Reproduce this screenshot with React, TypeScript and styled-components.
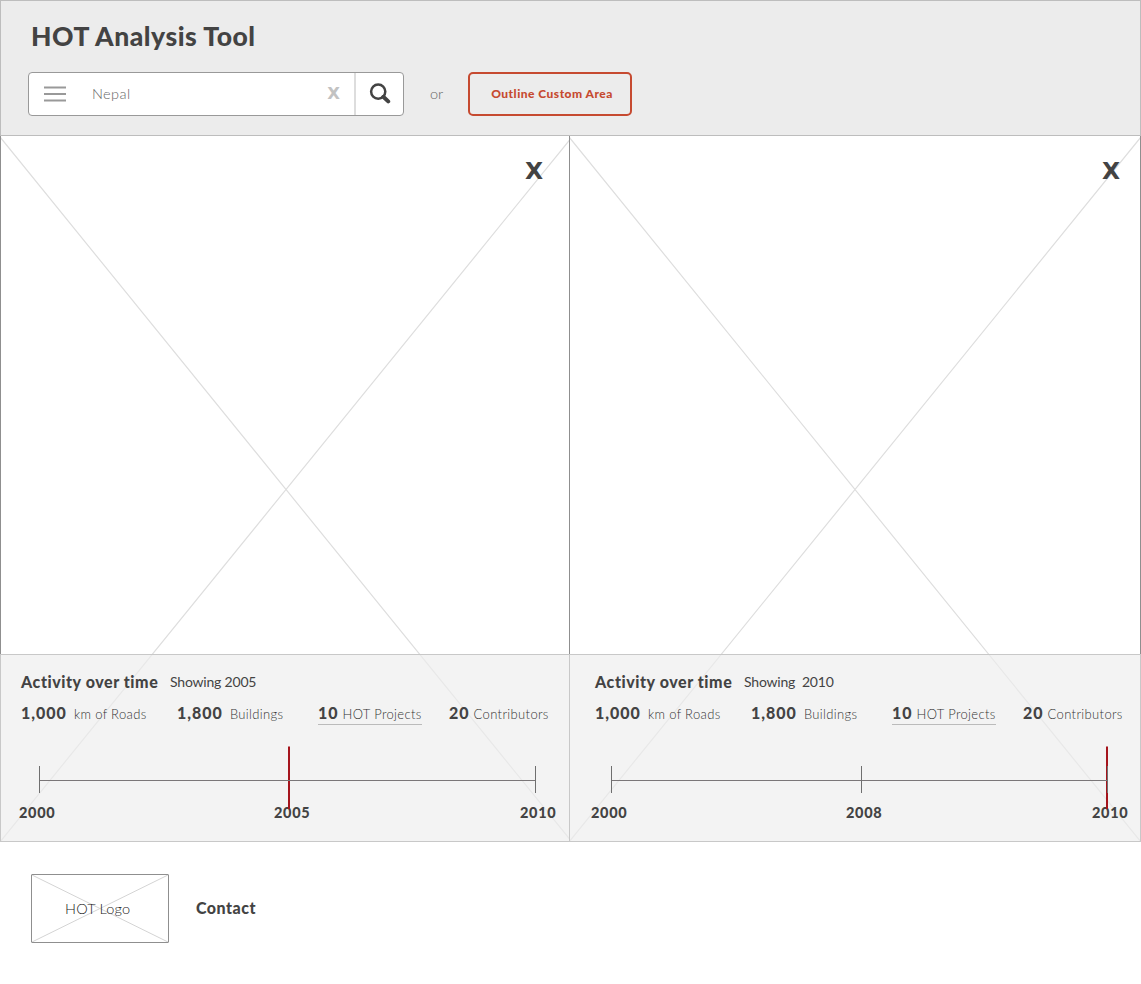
import React from "react";
import styled, { createGlobalStyle } from "styled-components";

const GlobalStyle = createGlobalStyle`
  *, *::before, *::after { box-sizing: border-box; }
  body {
    margin: 0;
    background: #fff;
    color: #434343;
    font-family: Lato, "Liberation Sans", sans-serif;
  }
`;

const Page = styled.div`
  width: 1141px;
  height: 984px;
  overflow: hidden;
`;

const Header = styled.header`
  height: 136px;
  padding: 19px 27px 0;
  background: #ececec;
  border: 1px solid #bdbdbd;
`;

const Title = styled.h1`
  margin: 0 0 20px 3px;
  font-size: 26.5px;
  font-weight: 900;
  line-height: 32px;
  letter-spacing: 0.52px;
`;

const Toolbar = styled.div`
  display: flex;
  align-items: center;
  height: 44px;
`;

const SearchBox = styled.div`
  display: flex;
  align-items: stretch;
  width: 376px;
  height: 44px;
  overflow: hidden;
  background: #fff;
  border: 1px solid #999;
  border-radius: 4px;
`;

const IconButton = styled.button<{ $width: number; $divided?: boolean }>`
  display: flex;
  align-items: center;
  justify-content: center;
  width: ${(p) => p.$width}px;
  padding: 0;
  background: none;
  border: 0;
  border-left: ${(p) => (p.$divided ? "2px solid #ddd" : "0")};
`;

const Query = styled.div`
  flex: 1;
  padding-left: 11px;
  color: #666;
  font-size: 14.5px;
  font-weight: 300;
  line-height: 42px;
  letter-spacing: 0.4px;
`;

const ClearButton = styled.button`
  width: 41px;
  padding: 0;
  color: #c2c2c2;
  background: none;
  border: 0;
  font: 700 16.5px/40px "DejaVu Sans", sans-serif;
`;

const Or = styled.span`
  width: 64px;
  padding-left: 26px;
  color: #666;
  font-size: 14.5px;
  font-weight: 300;
  line-height: 44px;
`;

const OutlineButton = styled.button`
  width: 164px;
  height: 44px;
  padding: 0 0 0 4px;
  color: #c64a30;
  background: none;
  border: 2px solid #c64a30;
  border-radius: 5px;
  font: 900 12px/40px Lato, sans-serif;
  letter-spacing: 0.48px;
  white-space: nowrap;
`;

const Comparison = styled.main`
  display: grid;
  grid-template-columns: 569px 572px;
  height: 706px;
`;

const Panel = styled.section`
  position: relative;
  display: flex;
  flex-direction: column;
  overflow: hidden;
`;

const Backdrop = styled.svg`
  position: absolute;
  inset: 0 auto auto 0;
`;

const MapArea = styled.div<{ $last?: boolean }>`
  position: relative;
  display: flex;
  justify-content: flex-end;
  align-items: flex-start;
  height: 518px;
  padding: 20px ${(p) => (p.$last ? 20 : 26)}px 0 0;
  border-left: 1px solid #8f8f8f;
  border-right: ${(p) => (p.$last ? "1px solid #8f8f8f" : "0")};
`;

const CloseButton = styled.button`
  padding: 0;
  color: #434343;
  background: none;
  border: 0;
  font: 700 23.5px/30px "DejaVu Sans", sans-serif;
`;

const Info = styled.div<{ $last?: boolean }>`
  position: relative;
  height: 188px;
  padding-top: 17px;
  background: rgba(237, 237, 237, 0.66);
  border: 1px solid #c8c8c8;
  border-right-width: ${(p) => (p.$last ? 1 : 0)}px;
`;

const Heading = styled.div<{ $indent: number }>`
  display: flex;
  height: 20px;
  margin-bottom: 11px;
  padding-left: ${(p) => p.$indent}px;
  line-height: 20px;
  white-space: pre;
`;

const HeadingTitle = styled.h2`
  width: 149px;
  margin: 0;
  font-size: 16px;
  font-weight: 900;
  letter-spacing: 0.56px;
`;

const Showing = styled.span`
  font-size: 14px;
  letter-spacing: -0.2px;
`;

const Stats = styled.div<{ $indent: number }>`
  display: grid;
  grid-template-columns: 156px 141px 131px auto;
  height: 22px;
  padding-left: ${(p) => p.$indent}px;
`;

const Stat = styled.div<{ $gap: number; $link?: boolean }>`
  display: flex;
  align-items: baseline;
  gap: ${(p) => p.$gap}px;
  justify-self: start;
  width: ${(p) => (p.$link ? "104px" : "auto")};
  height: 22px;
  border-bottom: ${(p) => (p.$link ? "1px solid #bbb" : "0")};
  line-height: 20px;
  white-space: nowrap;
`;

const Amount = styled.strong`
  font-size: 16px;
  font-weight: 900;
  letter-spacing: 1px;
`;

const Unit = styled.span`
  color: #333;
  font-size: 13px;
  font-weight: 300;
  letter-spacing: 0.35px;
`;

const Axis = styled.svg`
  position: relative;
  display: block;
  height: 62px;
  margin-top: 15px;
  overflow: visible;
`;

const Years = styled.div<{ $indent: number }>`
  display: grid;
  grid-template-columns: 255px 246px auto;
  padding-top: 1px;
  padding-left: ${(p) => p.$indent}px;
  font-size: 14.5px;
  font-weight: 900;
  line-height: 20px;
  letter-spacing: 0.7px;
`;

const Footer = styled.footer`
  display: flex;
  align-items: center;
  gap: 27px;
  padding: 32px 31px;
`;

const Logo = styled.div`
  position: relative;
  width: 138px;
  height: 69px;
  border: 1px solid #8f8f8f;
  border-radius: 1px;
`;

const LogoText = styled.span`
  position: relative;
  display: block;
  padding-left: 33px;
  color: #222;
  font-size: 14.5px;
  font-weight: 300;
  line-height: 67px;
  letter-spacing: 0.2px;
`;

const Contact = styled.a`
  height: 20px;
  margin-bottom: 2px;
  font-size: 16px;
  font-weight: 900;
  line-height: 20px;
  letter-spacing: 0.5px;
`;

type PeriodProps = {
  showing: string;
  middle: string;
  marker: number;
  middleTick?: boolean;
  last?: boolean;
};

function Period({ showing, middle, marker, middleTick, last }: PeriodProps) {
  const shift = last ? 3 : 0;
  const textIndent = last ? 25 : 20;
  const ticks = middleTick ? [38.5, 288.5, 534.5] : [38.5, 534.5];
  return (
    <Panel>
      <Backdrop width="572" height="706" fill="none" stroke="#dedede" strokeWidth="1.2">
        <path d="M0 1L572 706M0 706L572 1" />
      </Backdrop>
      <MapArea $last={last}>
        <CloseButton aria-label="Close map">X</CloseButton>
      </MapArea>
      <Info $last={last}>
        <Heading $indent={textIndent}>
          <HeadingTitle>Activity over time</HeadingTitle>
          <Showing>{showing}</Showing>
        </Heading>
        <Stats $indent={textIndent}>
          <Stat $gap={7}><Amount>1,000</Amount><Unit>km of Roads</Unit></Stat>
          <Stat $gap={7}><Amount>1,800</Amount><Unit>Buildings</Unit></Stat>
          <Stat $gap={4} $link><Amount>10</Amount><Unit>HOT Projects</Unit></Stat>
          <Stat $gap={4}><Amount>20</Amount><Unit>Contributors</Unit></Stat>
        </Stats>
        <Axis width="568" height="62" fill="none">
          <g transform={`translate(${shift} 0)`}>
            <path d={`M${marker} 6.5V69`} stroke="#a5141c" strokeWidth="2" />
            <path d="M38.5 40.5H534.5" stroke="#7a7678" />
            {ticks.map((x) => (
              <path key={x} d={`M${x} 26V53`} stroke="#6f6f6f" />
            ))}
          </g>
        </Axis>
        <Years $indent={18 + shift}>
          <span>2000</span>
          <span>{middle}</span>
          <span>2010</span>
        </Years>
      </Info>
    </Panel>
  );
}

export default function App() {
  return (
    <Page>
      <GlobalStyle />
      <Header>
        <Title>HOT Analysis Tool</Title>
        <Toolbar>
          <SearchBox>
            <IconButton $width={52} aria-label="Menu">
              <svg width="22" height="16" stroke="#999" strokeWidth="1.8">
                <path d="M0 1.5H22M0 8H22M0 14.5H22" />
              </svg>
            </IconButton>
            <Query>Nepal</Query>
            <ClearButton aria-label="Clear search">X</ClearButton>
            <IconButton $width={49} $divided aria-label="Search">
              <svg width="22" height="22" fill="none" stroke="#434343">
                <circle cx="9.2" cy="8.6" r="7.1" strokeWidth="2.5" />
                <path d="M14.3 13.8L19.2 18.4" strokeWidth="4" strokeLinecap="round" />
              </svg>
            </IconButton>
          </SearchBox>
          <Or>or</Or>
          <OutlineButton>Outline Custom Area</OutlineButton>
        </Toolbar>
      </Header>
      <Comparison>
        <Period showing="Showing 2005" middle="2005" marker={288} />
        <Period showing="Showing  2010" middle="2008" marker={534} middleTick last />
      </Comparison>
      <Footer>
        <Logo>
          <Backdrop width="136" height="67" fill="none" stroke="#d4d4d4">
            <path d="M0 0L136 67M0 67L136 0" />
          </Backdrop>
          <LogoText>HOT Logo</LogoText>
        </Logo>
        <Contact>Contact</Contact>
      </Footer>
    </Page>
  );
}
